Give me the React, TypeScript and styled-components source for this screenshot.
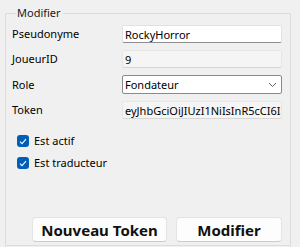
import React from 'react';
import styled, { createGlobalStyle } from 'styled-components';

const GlobalStyle = createGlobalStyle`
  html, body {
    margin: 0;
    padding: 0;
    background: #f0f0f0;
  }
  body {
    font-family: 'Segoe UI', 'Noto Sans', 'Liberation Sans', sans-serif;
    font-size: 11px;
    color: #000;
  }
`;

const Page = styled.div`
  width: 300px;
  height: 247px;
  box-sizing: border-box;
  padding: 5px 9px 1px 5px;
  display: flex;
`;

const Group = styled.fieldset`
  flex: 1;
  margin: 0;
  padding: 4px 8px 3px 6px;
  border: 1px solid #dcdcdc;
  border-radius: 0;
  min-width: 0;
  display: flex;
  flex-direction: column;
`;

const Legend = styled.legend`
  padding: 0 2px 0 1px;
  margin-left: 4px;
  line-height: 16px;
  font-size: 11px;
  color: #1a1a1a;
`;

const Body = styled.div`
  flex: 1;
  display: flex;
  flex-direction: column;
`;

const Form = styled.div`
  display: grid;
  grid-template-columns: 110px 1fr;
  row-gap: 7px;
  align-items: center;
`;

const Label = styled.span`
  line-height: 18px;
  white-space: nowrap;
`;

const Field = styled.div<{ readOnly?: boolean }>`
  height: 18px;
  box-sizing: border-box;
  padding: 0 2px;
  display: flex;
  align-items: center;
  overflow: hidden;
  white-space: nowrap;
  border-radius: 2px;
  background: ${(p) => (p.readOnly ? '#f5f5f5' : '#ffffff')};
  border: 1px solid ${(p) => (p.readOnly ? '#e6e6e6' : '#e2e2e2')};
  border-bottom-color: ${(p) => (p.readOnly ? '#d6d6d6' : '#8f8f8f')};
`;

const Select = styled.div`
  height: 19px;
  box-sizing: border-box;
  padding: 0 4px 0 2px;
  display: flex;
  align-items: center;
  justify-content: space-between;
  background: #ffffff;
  border: 1px solid #8a8a8a;
  border-radius: 2px;
`;

const Checks = styled.div`
  margin-top: 16px;
  padding-left: 5px;
  display: flex;
  flex-direction: column;
  gap: 10px;
`;

const CheckRow = styled.label`
  display: flex;
  align-items: center;
  gap: 5px;
  line-height: 12px;
`;

const Box = styled.span`
  width: 12px;
  height: 12px;
  border-radius: 3px;
  background: #005fb8;
  display: flex;
  align-items: center;
  justify-content: center;
`;

const Buttons = styled.div`
  margin-top: auto;
  padding-left: 20px;
  display: flex;
  gap: 9px;
`;

const Button = styled.button<{ w: number }>`
  width: ${(p) => p.w}px;
  height: 25px;
  box-sizing: border-box;
  padding: 0;
  background: #fdfdfd;
  border: 1px solid #e3e3e3;
  border-bottom-color: #cccccc;
  border-radius: 4px;
  font-family: 'Segoe UI', 'Noto Sans', 'Liberation Sans', sans-serif;
  font-weight: 700;
  font-size: 15px;
  color: #111;
`;

const Check = () => (
  <Box>
    <svg width="8" height="7" viewBox="0 0 8 7">
      <path d="M1 3.6 L3 5.6 L7 1.2" fill="none" stroke="#fff" strokeWidth="1.1" />
    </svg>
  </Box>
);

const Chevron = () => (
  <svg width="9" height="6" viewBox="0 0 9 6">
    <path d="M1 1 L4.5 4.5 L8 1" fill="none" stroke="#606060" strokeWidth="1" />
  </svg>
);

export default function App() {
  return (
    <>
      <GlobalStyle />
      <Page>
        <Group>
          <Legend>Modifier</Legend>
          <Body>
            <Form>
              <Label>Pseudonyme</Label>
              <Field>RockyHorror</Field>
              <Label>JoueurID</Label>
              <Field readOnly>9</Field>
              <Label>Role</Label>
              <Select>
                <span>Fondateur</span>
                <Chevron />
              </Select>
              <Label>Token</Label>
              <Field readOnly>eyJhbGciOiJIUzI1NiIsInR5cCI6IkpXVCJ9</Field>
            </Form>
            <Checks>
              <CheckRow>
                <Check />
                Est actif
              </CheckRow>
              <CheckRow>
                <Check />
                Est traducteur
              </CheckRow>
            </Checks>
            <Buttons>
              <Button w={139}>Nouveau Token</Button>
              <Button w={109}>Modifier</Button>
            </Buttons>
          </Body>
        </Group>
      </Page>
    </>
  );
}
